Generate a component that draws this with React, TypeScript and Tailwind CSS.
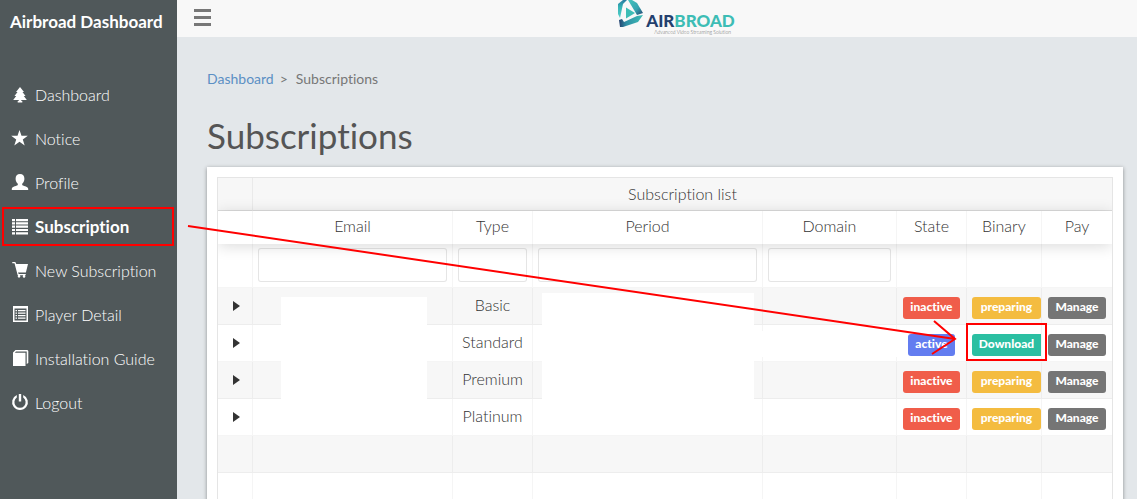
import type { ReactNode } from 'react';
import clsx from 'clsx';

interface NavItem {
  label: string;
  icon: ReactNode;
  active?: boolean;
}

const NAV_ITEMS: NavItem[] = [
  {
    label: 'Dashboard',
    icon: <path d="M8 0 12 5h-1.500l3 4h-1.700l3 4H9.300v1h1v1.500H5.700V14h1v-1H1.200l3-4H2.500l3-4H4z" />,
  },
  {
    label: 'Notice',
    icon: <path d="M7.500-1 9.500 4.800h6.300L10.800 8.500l1.900 5.900-5.200-3.600-5.200 3.600L4.200 8.500-.8 4.800h6.300z" />,
  },
  {
    label: 'Profile',
    icon: <path d="M8-1c2.900 0 4.400 2 4.400 4.700 0 2-.8 3.900-2.200 5v1.200c0 .7 6 1.400 6 3.800V15H-.2v-1.300c0-2.400 6-3.100 6-3.800V8.700c-1.400-1.100-2.200-3-2.200-5C3.600 1 5.100-1 8-1z" />,
  },
  {
    label: 'Subscription',
    active: true,
    icon: <path d="M0 0h3v2.200H0zM4 0h12v2.200H4zM0 3.300h3v2.200H0zM4 3.300h12v2.200H4zM0 6.600h3v2.200H0zM4 6.600h12v2.200H4zM0 9.900h3v2.200H0zM4 9.900h12v2.200H4zM0 13.200h3v2.200H0zM4 13.200h12v2.200H4z" />,
  },
  {
    label: 'New Subscription',
    icon: <path d="M.3-1h3l1 2H16l-2.100 8.500H6l.7 1.500h7v1.300h-.9a1.300 1.300 0 1 1-1.500 0H7.900a1.300 1.300 0 1 1-1.700 0h-.5L2.500.3H.3z" />,
  },
  {
    label: 'Player Detail',
    icon: <path fillRule="evenodd" d="M1-1h15v16H1zM2.500 1.500v12h12v-12zM3.500 3H5v1.300H3.500zM6 3h7.500v1.300H6zM3.500 5.500H5v1.300H3.500zM6 5.500h7.500v1.300H6zM3.500 8H5v1.300H3.500zM6 8h7.500v1.300H6zM3.500 10.500H5v1.300H3.500zM6 10.500h7.500v1.300H6z" />,
  },
  {
    label: 'Installation Guide',
    icon: <path d="M3.500-1H15.500l.8 1v12l-1.600 1V.5H4L2.800 1.800h10.700V15H1V1.500z" />,
  },
  {
    label: 'Logout',
    icon: <path d="M6.800-1h2.400v7.500H6.800zM4.800-.1v2.700a5.600 5.600 0 1 0 6.400 0V-.1a7.900 7.900 0 1 1-6.400 0z" />,
  },
];

const COLUMNS = ['Email', 'Type', 'Period', 'Domain', 'State', 'Binary', 'Pay'];
const FILTERABLE = ['Email', 'Type', 'Period', 'Domain'];

const ROWS = [
  { type: 'Basic', active: false },
  { type: 'Standard', active: true },
  { type: 'Premium', active: false },
  { type: 'Platinum', active: false },
];

const badge = 'mt-1 block h-[22px] rounded-[3px] pb-[2px] text-[12px] leading-5 font-black text-white';
const cell = 'border-r border-black/4 p-0 last:border-r-0';

function Sidebar() {
  return (
    <aside className="w-[177px] shrink-0 bg-[#50585a] text-white">
      <h2 className="px-[10px] pt-[10px] text-[17px] leading-6 font-bold whitespace-nowrap">Airbroad Dashboard</h2>
      <nav className="mt-[39px]">
        <ul>
          {NAV_ITEMS.map((item) => (
            <li key={item.label} className="relative">
              <a
                href="#"
                className={clsx(
                  'flex h-11 items-center gap-[7px] pl-3 whitespace-nowrap',
                  item.active ? 'text-[17px] font-bold' : 'text-[16px] font-light'
                )}
              >
                <svg className="size-4 shrink-0 overflow-visible" viewBox="0 0 16 16" fill="currentColor" aria-hidden="true">
                  {item.icon}
                </svg>
                {item.label}
              </a>
              {item.active && (
                <span className="pointer-events-none absolute top-[2px] right-[3px] left-[2px] h-[39px] border-2 border-[#f00]" />
              )}
            </li>
          ))}
        </ul>
      </nav>
    </aside>
  );
}

function Logo() {
  return (
    <a href="#" aria-label="Airbroad" className="flex h-[37px] items-start">
      <svg className="h-7 w-[29px] shrink-0" viewBox="0 0 29 28" aria-hidden="true">
        <defs>
          <linearGradient id="blade-left" x1="0" y1="0" x2="0" y2="1">
            <stop offset="0" stopColor="#2a7ba0" />
            <stop offset=".4" stopColor="#35b4b6" />
            <stop offset="1" stopColor="#56cfca" />
          </linearGradient>
          <linearGradient id="blade-bottom" x1="0" y1="0" x2="1" y2="0">
            <stop offset="0" stopColor="#24406e" />
            <stop offset=".3" stopColor="#2f8fa5" />
            <stop offset="1" stopColor="#3dbdb5" />
          </linearGradient>
          <linearGradient id="blade-right" x1="0" y1="0" x2="1" y2="1">
            <stop offset="0" stopColor="#45c4be" />
            <stop offset=".6" stopColor="#35a4b0" />
            <stop offset="1" stopColor="#24406e" />
          </linearGradient>
        </defs>
        <path d="M1 4 6 0h4L6 4 3 18 1 14z" fill="url(#blade-left)" />
        <path d="M2 20 5 19l2 3 13-6 6-1-5 7-15 5H3z" fill="url(#blade-bottom)" />
        <path d="M11 0h4l5 3 6 10-6 2z" fill="url(#blade-right)" />
        <path d="M9 7.500v11l9-5.500z" fill="#3dbdb5" />
      </svg>
      <span className="pt-[11px]">
        <span className="block text-[17px] leading-5 font-black text-[#24406e]">
          AIR<span className="text-[#3dbdb5]">BROAD</span>
        </span>
        <span className="-mt-px block pl-2 text-[5px] leading-[5px] font-light text-[#666]">
          Advanced Video Streaming Solution
        </span>
      </span>
    </a>
  );
}

function Topbar() {
  return (
    <header className="flex h-[37px] items-start bg-[#f8f8f8]">
      <button type="button" aria-label="Toggle menu" className="mt-[9px] ml-[17px] flex w-[17px] flex-col gap-1">
        <span className="h-[3px] w-full bg-[#777]" />
        <span className="h-[3px] w-full bg-[#777]" />
        <span className="h-[3px] w-full bg-[#777]" />
      </button>
      <div className="flex flex-1 justify-center pl-1">
        <Logo />
      </div>
    </header>
  );
}

function SubscriptionTable() {
  return (
    <div className="overflow-hidden border border-black/10">
      <table className="w-full table-fixed border-separate border-spacing-0 text-center text-[16px] leading-6 font-light text-[#333]">
        <colgroup>
          <col className="w-[35px]" />
          <col className="w-[200px]" />
          <col className="w-[80px]" />
          <col />
          <col className="w-[134px]" />
          <col className="w-[70px]" />
          <col className="w-[75px]" />
          <col className="w-[70px]" />
        </colgroup>
        <thead>
          <tr className="h-[33px] bg-[#f7f7f7]">
            <th className="border-r border-b border-r-black/5 border-b-black/10 p-0" />
            <th colSpan={7} className="border-b border-black/10 p-0 pb-px font-light">
              Subscription list
            </th>
          </tr>
          <tr className="relative h-[33px] bg-white shadow-[0_2px_15px_0_rgba(0,0,0,0.15)]">
            <th className={cell} />
            {COLUMNS.map((name) => (
              <th key={name} className={clsx(cell, 'pb-1 font-light')}>
                {name}
              </th>
            ))}
          </tr>
          <tr className="h-[44px]">
            <td className="border-r border-b border-black/4 p-0" />
            {COLUMNS.map((name) => (
              <td key={name} className="border-r border-b border-black/4 px-[5px] pt-0 pb-px last:border-r-0">
                {FILTERABLE.includes(name) && (
                  <input
                    type="text"
                    aria-label={`Filter ${name}`}
                    className="block h-[34px] w-full rounded-[3px] border border-black/10 bg-white px-2"
                  />
                )}
              </td>
            ))}
          </tr>
        </thead>
        <tbody>
          {ROWS.map((row, index) => (
            <tr key={row.type} className="h-[37px] odd:bg-[#f7f7f7] [&>td]:border-b">
              <td className={cell}>
                <button type="button" aria-label={`Expand ${row.type}`} className="ml-px block w-full">
                  <svg className="mx-auto h-[10px] w-[7px]" viewBox="0 0 7 10" fill="#333" aria-hidden="true">
                    <path d="M0 0 7 5 0 10z" />
                  </svg>
                </button>
              </td>
              <td className={clsx(cell, 'relative')}>
                {index === 0 && <div className="absolute top-[9px] left-7 z-10 h-[102px] w-[146px] bg-white" />}
              </td>
              <td className={clsx(cell, 'pb-[2px]')}>{row.type}</td>
              <td className={clsx(cell, 'relative')}>
                {index === 0 && <div className="absolute top-[5px] right-2 left-[9px] z-10 h-[106px] bg-white" />}
              </td>
              <td className={clsx(cell, 'relative')}>
                {row.active && <div className="absolute -inset-x-px top-[6px] z-10 h-[26px] bg-white" />}
              </td>
              <td className={cell}>
                <button
                  type="button"
                  className={clsx(badge, 'mx-auto px-[7px]', row.active ? 'bg-[#637df0]' : 'bg-[#f05d4a]')}
                >
                  {row.active ? 'active' : 'inactive'}
                </button>
              </td>
              <td className={clsx(cell, 'relative pl-[5px]')}>
                {row.active ? (
                  <>
                    <button type="button" className={clsx(badge, 'w-[69px] rounded-r-none bg-[#2bbfa2]')}>
                      Download
                    </button>
                    <span className="pointer-events-none absolute -top-[2px] -left-px z-10 h-[38px] w-[81px] border-2 border-[#f00]" />
                  </>
                ) : (
                  <button type="button" className={clsx(badge, 'w-[69px] bg-[#f4bc40]')}>
                    preparing
                  </button>
                )}
              </td>
              <td className={cell}>
                <button type="button" className={clsx(badge, 'mx-auto w-[58px] bg-[#757575]')}>
                  Manage
                </button>
              </td>
            </tr>
          ))}
          {/* padding rows up to the page size */}
          {[0, 1, 2, 3].map((n) => (
            <tr key={n} className="h-[37px] odd:bg-[#f7f7f7] [&>td]:border-b">
              <td className={cell} />
              {COLUMNS.map((name) => (
                <td key={name} className={cell} />
              ))}
            </tr>
          ))}
        </tbody>
      </table>
    </div>
  );
}

export default function App() {
  return (
    <div className="relative flex h-screen overflow-hidden bg-[#e3e7ea] font-['Lato',sans-serif] [font-variant-ligatures:none]">
      <Sidebar />
      <div className="min-w-0 flex-1">
        <Topbar />
        <main className="pt-8 pr-[14px] pl-[30px]">
          <nav aria-label="Breadcrumb" className="flex text-[14px] leading-5 text-[#777]">
            <a href="#" className="text-[#5b8fc4]">Dashboard</a>
            <span className="mr-2 ml-[6px]">&gt;</span>
            <span>Subscriptions</span>
          </nav>
          <h1 className="mt-[26px] text-[35px] leading-10 text-[#555]">Subscriptions</h1>
          <section className="mt-3 bg-white p-[10px] shadow-[0_1px_4px_rgba(0,0,0,0.4)]">
            <SubscriptionTable />
          </section>
        </main>
      </div>

      {/* pointer from the menu entry to the download button */}
      <svg className="pointer-events-none absolute inset-0 z-20 size-full" fill="none" stroke="#f00" strokeWidth="2" aria-hidden="true">
        <path d="M188 226 955 339M934 321l21 18-23 15" />
      </svg>
    </div>
  );
}
